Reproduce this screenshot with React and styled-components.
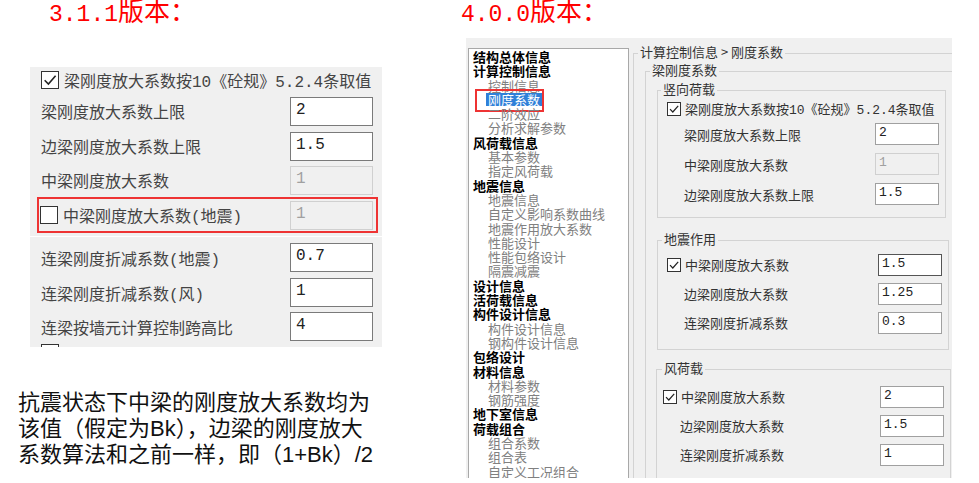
import React from 'react';
import styled, { createGlobalStyle } from 'styled-components';

const CJK = `"Noto Sans CJK SC", sans-serif`;
const MONO = `"Liberation Mono", "Noto Sans CJK SC", monospace`;

const GlobalStyle = createGlobalStyle`
  body {
    margin: 0;
    background: #fff;
    font-family: ${CJK};
  }
`;

const Page = styled.div`
  display: flex;
  width: 979px;
  height: 483px;
  overflow: hidden;
`;

const LeftCol = styled.div`
  width: 460px;
  flex: none;
`;

const RightCol = styled.div`
  flex: 1;
  min-width: 0;
`;

const Title = styled.div`
  height: 38px;
  padding-left: ${(p) => p.$indent}px;
  font-family: ${MONO};
  font-size: 26px;
  line-height: 28px;
  color: #ff0000;
  white-space: nowrap;
`;

const Num = styled.span`
  font-size: 23px;
`;

/* ---- 3.1.1 dialog ---- */

const OldPanel = styled.div`
  margin: 29px 0 0 30px;
  width: 352px;
  height: 280px;
  overflow: hidden;
  background: #f0f0f0;
  font-family: ${MONO};
  font-size: 16px;
  color: #444;
`;

const OldRow = styled.div`
  display: flex;
  align-items: ${(p) => (p.$top ? 'flex-start' : 'center')};
  height: ${(p) => p.$h}px;
  margin-top: ${(p) => p.$mt ?? 0}px;
  padding: ${(p) => (p.$top ? 1 : 0)}px ${(p) => p.$pr ?? 9}px 0 ${(p) => p.$pl ?? 11}px;
  white-space: nowrap;
`;

const Highlight = styled.div`
  margin: 0 4px 0 7px;
  border: 2px solid #ee3333;
`;

const OldDivider = styled.div`
  height: 1px;
  margin-top: 3px;
  background: #fff;
`;

const OldBox = styled.span`
  flex: none;
  width: 18px;
  height: 18px;
  box-sizing: border-box;
  margin-right: 5px;
  border: 1px solid #333;
  background: #fff;
  display: flex;
`;

const OldInput = styled.div`
  margin-left: auto;
  flex: none;
  width: 83px;
  height: 29px;
  box-sizing: border-box;
  padding: 3px 5px;
  line-height: 18px;
  border: 1px solid ${(p) => (p.$disabled ? '#d0d0d0' : '#7a7a7a')};
  background: ${(p) => (p.$disabled ? '#f0f0f0' : '#fff')};
  color: ${(p) => (p.$disabled ? '#a0a0a0' : '#222')};
`;

const Note = styled.p`
  margin: 43px 0 0 18px;
  font-family: "Liberation Sans", "Noto Sans CJK SC", sans-serif;
  font-size: 22px;
  line-height: 26px;
  color: #111;
  white-space: nowrap;
`;

/* ---- 4.0.0 dialog ---- */

const NewPanel = styled.div`
  display: flex;
  margin-left: 6px;
  width: 486px;
  height: 440px;
  overflow: hidden;
  background: #f0f0f0;
  font-family: ${CJK};
  font-size: 13px;
  color: #333;
`;

const Tree = styled.ul`
  list-style: none;
  margin: 10px 0 0 2px;
  padding: 1px 0 0;
  width: 159px;
  flex: none;
  background: #fff;
  border: 1px solid #a8a8a8;
  border-bottom: none;
`;

const TreeItem = styled.li`
  position: relative;
  height: 14.3px;
  line-height: 14.3px;
  padding-left: ${(p) => (p.$child ? 19 : 4)}px;
  font-weight: ${(p) => (p.$child ? 400 : 700)};
  color: ${(p) => (p.$child ? '#808080' : '#000')};
  white-space: nowrap;
`;

const Selected = styled.span`
  display: inline-block;
  margin-left: -2px;
  padding: 0 2px;
  line-height: 13px;
  background: #2f80d8;
  color: #fff;
`;

const RedMark = styled.span`
  position: absolute;
  left: 6px;
  top: -4px;
  width: 69px;
  height: 23px;
  box-sizing: border-box;
  border: 2px solid #ee3333;
`;

const Content = styled.div`
  flex: 1;
  min-width: 0;
  margin-left: 4px;
  padding-top: 15px;
`;

const Group = styled.div`
  border: 1px solid #d3d3d3;
  ${(p) => p.$open && 'border-right: none; border-bottom: none;'}
  margin: ${(p) => p.$mt ?? 0}px 0 0 ${(p) => p.$ml ?? 0}px;
  width: ${(p) => (p.$w ? `${p.$w}px` : 'auto')};
  box-sizing: border-box;
  padding: 0 0 ${(p) => p.$pb ?? 0}px ${(p) => p.$pl ?? 0}px;
`;

const Caption = styled.div`
  display: table;
  margin: -10px 0 ${(p) => p.$gap ?? 0}px ${(p) => p.$x}px;
  padding: 0 2px;
  background: #f0f0f0;
  line-height: 16px;
  white-space: nowrap;
`;

const NewRow = styled.div`
  display: flex;
  align-items: center;
  height: ${(p) => p.$h}px;
  padding: 0 ${(p) => p.$pr ?? 6}px 0 ${(p) => p.$pl}px;
  font-family: ${MONO};
  white-space: nowrap;
`;

const NewBox = styled.span`
  flex: none;
  width: 14px;
  height: 14px;
  box-sizing: border-box;
  margin-right: 4px;
  border: 1px solid #333;
  background: #fff;
  display: flex;
`;

const NewInput = styled.div`
  margin-left: auto;
  flex: none;
  width: 64px;
  height: 22px;
  box-sizing: border-box;
  padding: 1px 3px;
  line-height: 16px;
  font-size: 13px;
  border: 1px solid
    ${(p) => (p.$disabled ? '#d0d0d0' : p.$focus ? '#555' : '#a0a0a0')};
  background: ${(p) => (p.$disabled ? '#f0f0f0' : '#fff')};
  color: ${(p) => (p.$disabled ? '#a0a0a0' : '#222')};
`;

const Check = ({ size, checked }) => {
  const Box = size === 'big' ? OldBox : NewBox;
  const s = size === 'big' ? 16 : 12;
  return (
    <Box>
      {checked && (
        <svg width={s} height={s} viewBox="0 0 12 12">
          <polyline
            points="2,6.2 4.8,9 10.2,2.8"
            fill="none"
            stroke="#222"
            strokeWidth="1.2"
          />
        </svg>
      )}
    </Box>
  );
};

const tree = [
  ['结构总体信息'],
  ['计算控制信息'],
  ['控制信息', 1],
  ['刚度系数', 1, 1],
  ['二阶效应', 1],
  ['分析求解参数', 1],
  ['风荷载信息'],
  ['基本参数', 1],
  ['指定风荷载', 1],
  ['地震信息'],
  ['地震信息', 1],
  ['自定义影响系数曲线', 1],
  ['地震作用放大系数', 1],
  ['性能设计', 1],
  ['性能包络设计', 1],
  ['隔震减震', 1],
  ['设计信息'],
  ['活荷载信息'],
  ['构件设计信息'],
  ['构件设计信息', 1],
  ['钢构件设计信息', 1],
  ['包络设计'],
  ['材料信息'],
  ['材料参数', 1],
  ['钢筋强度', 1],
  ['地下室信息'],
  ['荷载组合'],
  ['组合系数', 1],
  ['组合表', 1],
  ['自定义工况组合', 1],
];

const Field = ({ label, value, check, checked, disabled, focus, h, pl = 26 }) => (
  <NewRow $h={h} $pl={check ? pl - 17 : pl}>
    {check && <Check checked={checked} />}
    {label}
    {value !== undefined && (
      <NewInput $disabled={disabled} $focus={focus}>
        {value}
      </NewInput>
    )}
  </NewRow>
);

export default function App() {
  return (
    <Page>
      <GlobalStyle />
      <LeftCol>
        <Title $indent={49}>
          <Num>3.1.1</Num>版本：
        </Title>
        <OldPanel>
          <OldRow $h={26}>
            <Check size="big" checked />
            梁刚度放大系数按10《砼规》5.2.4条取值
          </OldRow>
          <OldRow $h={36}>
            梁刚度放大系数上限<OldInput>2</OldInput>
          </OldRow>
          <OldRow $h={34}>
            边梁刚度放大系数上限<OldInput>1.5</OldInput>
          </OldRow>
          <OldRow $h={34}>
            中梁刚度放大系数<OldInput $disabled>1</OldInput>
          </OldRow>
          <Highlight>
            <OldRow $h={32} $pl={1} $pr={3}>
              <Check size="big" />
              中梁刚度放大系数(地震)
              <OldInput $disabled>1</OldInput>
            </OldRow>
          </Highlight>
          <OldDivider />
          <OldRow $h={35} $mt={3}>
            连梁刚度折减系数(地震)<OldInput>0.7</OldInput>
          </OldRow>
          <OldRow $h={35}>
            连梁刚度折减系数(风)<OldInput>1</OldInput>
          </OldRow>
          <OldRow $h={33}>
            连梁按墙元计算控制跨高比<OldInput>4</OldInput>
          </OldRow>
          <OldRow $h={30} $top>
            <Check size="big" />
            普通梁连梁砼等级默认同墙
          </OldRow>
        </OldPanel>
        <Note>
          抗震状态下中梁的刚度放大系数均为
          <br />
          该值（假定为Bk），边梁的刚度放大
          <br />
          系数算法和之前一样，即（1+Bk）/2
        </Note>
      </LeftCol>

      <RightCol>
        <Title $indent={1}>
          <Num>4.0.0</Num>版本：
        </Title>
        <NewPanel>
          <Tree>
            {tree.map(([text, child, sel], i) => (
              <TreeItem key={i} $child={!!child}>
                {sel ? (
                  <>
                    <Selected>{text}</Selected>
                    <RedMark />
                  </>
                ) : (
                  text
                )}
              </TreeItem>
            ))}
          </Tree>
          <Content>
            <Group $open $pl={11}>
              <Caption $x={-7}>计算控制信息 &gt; 刚度系数</Caption>
              <Group $open $mt={11} $pl={11}>
                <Caption $x={-7}>梁刚度系数</Caption>

                <Group $mt={12} $w={289} $pb={8}>
                  <Caption $x={3} $gap={1}>竖向荷载</Caption>
                  <Field h={21} check checked label="梁刚度放大系数按10《砼规》5.2.4条取值" />
                  <Field h={30} label="梁刚度放大系数上限" value="2" />
                  <Field h={30} label="中梁刚度放大系数" value="1" disabled />
                  <Field h={30} label="边梁刚度放大系数上限" value="1.5" />
                </Group>

                <Group $mt={22} $w={292} $pb={12}>
                  <Caption $x={4} $gap={3}>地震作用</Caption>
                  <Field h={29} check checked label="中梁刚度放大系数" value="1.5" focus />
                  <Field h={29} label="边梁刚度放大系数" value="1.25" />
                  <Field h={29} label="连梁刚度折减系数" value="0.3" />
                </Group>

                <Group $mt={19} $ml={-1} $w={295} $pb={12}>
                  <Caption $x={5} $gap={6}>风荷载</Caption>
                  <Field h={29} pl={23} check checked label="中梁刚度放大系数" value="2" />
                  <Field h={29} pl={23} label="边梁刚度放大系数" value="1.5" />
                  <Field h={29} pl={23} label="连梁刚度折减系数" value="1" />
                </Group>
              </Group>
            </Group>
          </Content>
        </NewPanel>
      </RightCol>
    </Page>
  );
}
